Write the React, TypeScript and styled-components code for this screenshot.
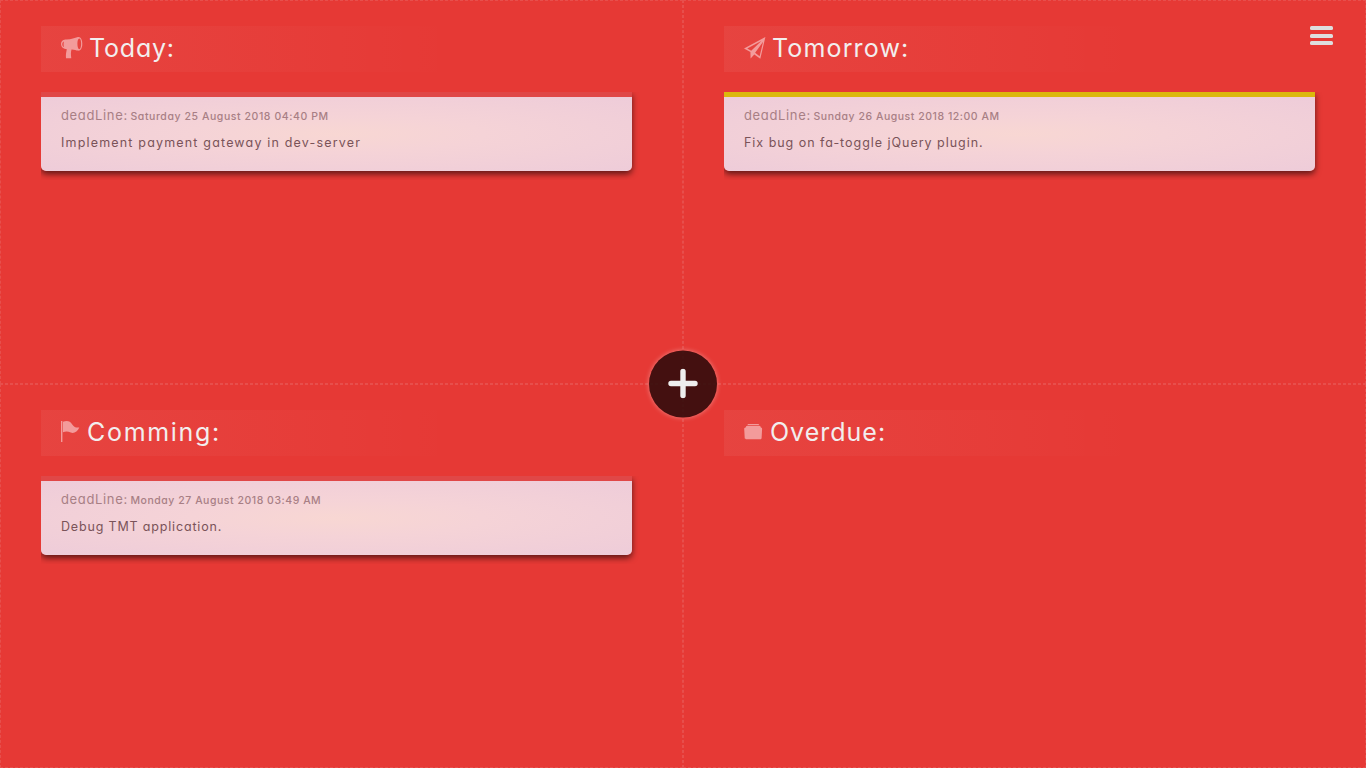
import React from 'react';
import styled, { createGlobalStyle } from 'styled-components';

const GlobalStyle = createGlobalStyle`
  *, *::before, *::after { box-sizing: border-box; }
  body {
    margin: 0;
    background: #e63935;
    overflow: hidden;
    font-family: Inter, 'Open Sans', sans-serif;
    font-feature-settings: 'cv11', 'ss03';
  }
`;

const Board = styled.main`
  position: relative;
  display: grid;
  grid-template-columns: 1fr 1fr;
  grid-template-rows: 1fr 1fr;
  width: 100vw;
  height: 100vh;
`;

const Quadrant = styled.section`
  display: flex;
  flex-direction: column;
  align-items: flex-start;
  padding: 25px 40px 0;
  border: 1px dashed rgba(238, 238, 238, 0.12);
`;

const Heading = styled.h2`
  display: flex;
  align-items: flex-start;
  width: 591px;
  height: 46px;
  margin: 0 0 20px;
  padding-left: 20px;
  background: linear-gradient(to right, rgba(238, 238, 238, 0.06), rgba(238, 238, 238, 0) 70%);
  color: #f2eeee;
  font-weight: 400;
`;

const HeadingIcon = styled.svg<{ $gap: number }>`
  flex: none;
  height: 24px;
  margin: 10px ${({ $gap }) => $gap}px 0 0;
  color: #f39b9b;
  fill: currentColor;
`;

const HeadingText = styled.span<{ $spacing: number }>`
  font-size: 25px;
  line-height: 45px;
  letter-spacing: ${({ $spacing }) => $spacing}px;
  white-space: nowrap;
`;

const TaskList = styled.ul`
  width: 600px;
  margin: 0;
  padding: 0 0 9px;
  list-style: none;
  overflow: hidden;
`;

const TaskCard = styled.li<{ $accent: string }>`
  display: flex;
  flex-direction: column;
  width: 591px;
  height: 79px;
  padding: 6px 20px 0;
  border-top: 5px solid ${({ $accent }) => $accent};
  border-radius: 0 0 5px 5px;
  background: radial-gradient(ellipse at center, #f8d7d3, #f5d3d7 35%, #eeccd9) padding-box;
  box-shadow: 0 3px 6px rgba(0, 0, 0, 0.6);
`;

const Deadline = styled.div`
  display: flex;
  align-items: baseline;
  height: 24px;
  line-height: 24px;
  color: #a87f85;
  white-space: nowrap;
`;

const DeadlineLabel = styled.span`
  width: 69.5px;
  font-size: 13px;
  letter-spacing: 0.65px;
`;

const DeadlineDate = styled.span<{ $spacing: number }>`
  font-size: 10.5px;
  font-weight: 500;
  letter-spacing: ${({ $spacing }) => $spacing}px;
`;

const TaskText = styled.p<{ $spacing: number }>`
  margin: 4px 0 0;
  font-size: 12.5px;
  line-height: 24px;
  letter-spacing: ${({ $spacing }) => $spacing}px;
  color: #7a5359;
  white-space: nowrap;
`;

const AddButton = styled.button`
  position: absolute;
  left: 50%;
  top: 50%;
  display: grid;
  place-items: center;
  width: 68px;
  height: 67px;
  padding: 0 0 1px;
  border: 0;
  border-radius: 50%;
  background: rgba(50, 12, 12, 0.9);
  box-shadow: 0 0 5px rgba(255, 255, 255, 0.4);
  transform: translate(-50%, -50%);
`;

const MenuButton = styled.button`
  position: absolute;
  top: 26px;
  right: 33px;
  display: flex;
  flex-direction: column;
  justify-content: space-between;
  width: 23px;
  height: 19px;
  padding: 0;
  border: 0;
  background: none;
`;

const MenuBar = styled.span`
  height: 4px;
  border-radius: 1.5px;
  background: #dedede;
`;

const MegaphoneIcon = () => (
  <HeadingIcon viewBox="0 0 22 24" width="22" $gap={6}>
    <path
      fillRule="evenodd"
      d="M17 1.100C19.800.6 21.300 3.700 21.300 7.800S19.800 15 17.200 14.600c-2.200-.3-4.100-1.300-6.700-1.200-.9 3-.6 5.400-.2 8.900H5c-.4-3.300.2-6.300.8-9.100C2.600 13.100 0 11.200 0 8.100S2.500 3.600 5.500 3.600c5 0 8.100-1.800 11.500-2.500Zm1.300 1.500c-1.200 0-1.900 2.400-1.900 5.200s.7 5.400 1.900 5.400 1.800-2.500 1.800-5.400-.6-5.200-1.800-5.200ZM3 5.500C2 6 1.300 6.900 1.300 8.200s.7 2.400 1.600 2.800c-.4-1.700-.5-3.900.1-5.500Z"
    />
  </HeadingIcon>
);

const PaperPlaneIcon = () => (
  <HeadingIcon viewBox="0 0 22 24" width="22" $gap={6}>
    <path
      fillRule="evenodd"
      d="M21.400 1 0 12.600l6.400 3.400.2 6.500 3.700-4.100 6 4.400L21.400 1ZM17.300 5.100 7.200 14.800 3.200 12.600l14.100-7.500Zm1.800.7-3.500 14.400-4.500-3.500 8-10.900Z"
    />
  </HeadingIcon>
);

const FlagIcon = () => (
  <HeadingIcon viewBox="0 0 19 24" width="19" $gap={7}>
    <path d="M0 1h1.400V22H0ZM2 1.700c4.500-1.500 7.200-.4 8.900 2.200 1.700 2.700 3.600 4 7.400 3.600-1.700 4-5.400 6.400-8.500 5.100-2.900-1.300-5.100-1.400-7.800-.3Z" />
  </HeadingIcon>
);

const FilingIcon = () => (
  <HeadingIcon viewBox="0 0 19 24" width="19" $gap={7}>
    <path d="M4.200 4h10.200l1.200 1.200H3ZM2.400 5.900h13.800l.7 1.500c1 .1 1.300.7 1.200 1.500l-.5 9.100c-.1.900-.5 1.200-1.300 1.200H2c-.8 0-1.200-.4-1.300-1.200L.2 8.900c-.1-.9.400-1.400 1.400-1.500Z" />
  </HeadingIcon>
);

const PlusIcon = () => (
  <svg width="30" height="30" viewBox="0 0 30 30" fill="none" stroke="#eeeeee" strokeWidth="5.400" strokeLinecap="round">
    <path d="M15 3v24M3 15h24" />
  </svg>
);

interface Task {
  date: string;
  dateSpacing: number;
  text: string;
  textSpacing: number;
  accent: string;
}

interface Section {
  title: string;
  spacing: number;
  Icon: React.FC;
  tasks: Task[];
}

const sections: Section[] = [
  {
    title: 'Today:',
    spacing: 0.8,
    Icon: MegaphoneIcon,
    tasks: [
      {
        date: 'Saturday 25 August 2018 04:40 PM',
        dateSpacing: 0.57,
        text: 'Implement payment gateway in dev-server',
        textSpacing: 1.18,
        accent: '#e04747',
      },
    ],
  },
  {
    title: 'Tomorrow:',
    spacing: 1.15,
    Icon: PaperPlaneIcon,
    tasks: [
      {
        date: 'Sunday 26 August 2018 12:00 AM',
        dateSpacing: 0.53,
        text: 'Fix bug on fa-toggle jQuery plugin.',
        textSpacing: 0.97,
        accent: '#dcb80c',
      },
    ],
  },
  {
    title: 'Comming:',
    spacing: 1.7,
    Icon: FlagIcon,
    tasks: [
      {
        date: 'Monday 27 August 2018 03:49 AM',
        dateSpacing: 0.53,
        text: 'Debug TMT application.',
        textSpacing: 0.83,
        accent: '#e04747',
      },
    ],
  },
  { title: 'Overdue:', spacing: 1, Icon: FilingIcon, tasks: [] },
];

export default function App() {
  return (
    <>
      <GlobalStyle />
      <Board>
        {sections.map(({ title, spacing, Icon, tasks }) => (
          <Quadrant key={title}>
            <Heading>
              <Icon />
              <HeadingText $spacing={spacing}>{title}</HeadingText>
            </Heading>
            <TaskList>
              {tasks.map((task) => (
                <TaskCard key={task.text} $accent={task.accent}>
                  <Deadline>
                    <DeadlineLabel>deadLine:</DeadlineLabel>
                    <DeadlineDate $spacing={task.dateSpacing}>{task.date}</DeadlineDate>
                  </Deadline>
                  <TaskText $spacing={task.textSpacing}>{task.text}</TaskText>
                </TaskCard>
              ))}
            </TaskList>
          </Quadrant>
        ))}
        <AddButton aria-label="Add task">
          <PlusIcon />
        </AddButton>
        <MenuButton aria-label="Menu">
          <MenuBar />
          <MenuBar />
          <MenuBar />
        </MenuButton>
      </Board>
    </>
  );
}
